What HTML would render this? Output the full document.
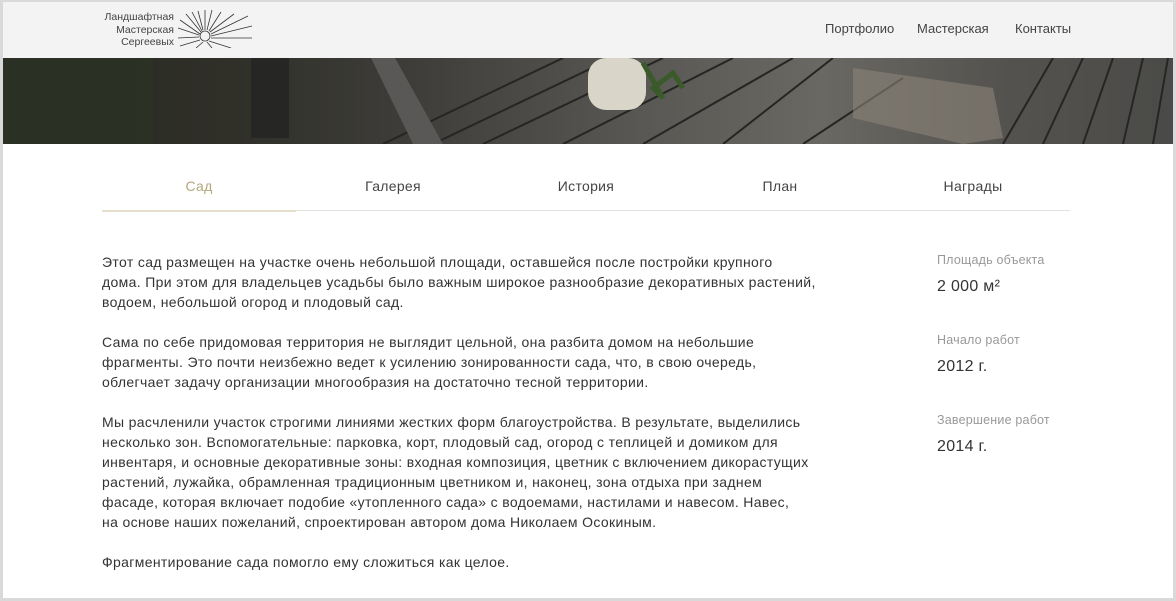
<!DOCTYPE html>
<html><head><meta charset="utf-8"><style>
*{margin:0;padding:0;box-sizing:border-box}
html,body{width:1176px;height:601px;overflow:hidden;background:#fff}
body{font-family:"Liberation Sans",sans-serif;color:#333;position:relative}
.frame{position:absolute;inset:0;border:3px solid #d9d9d9;border-top-width:2px;pointer-events:none;z-index:10}
.hdr{position:absolute;left:0;top:0;width:1176px;height:58px;background:#f3f3f3}
.logo{position:absolute;left:96px;top:11px;text-align:right;width:78px;font-size:10.5px;line-height:12.5px;color:#444}
.nav{position:absolute;top:21px;font-size:13px;color:#444}
.hero{position:absolute;left:3px;top:58px;width:1170px;height:86px;overflow:hidden;
background:linear-gradient(90deg,#26281f 0%,#303029 20%,#3e3d3a 35%,#595854 55%,#6a6863 70%,#55534f 85%,#4a4a48 100%)}
.tabs{position:absolute;left:102px;top:178px;width:968px;height:33px;border-bottom:1px solid #e2e2e2}
.tab{position:absolute;top:0;width:194px;text-align:center;font-size:14px;color:#444;letter-spacing:.3px}
.act{color:#b4a77c;border-bottom:2px solid #e6dfc9;height:34px}
.txt{position:absolute;left:102px;top:252px;font-size:14px;line-height:20px;color:#333;letter-spacing:.35px;white-space:nowrap}
.txt p{margin-bottom:20px}
.side{position:absolute;left:937px;white-space:nowrap}
.lab{font-size:12.5px;color:#999;letter-spacing:.2px}
.val{font-size:16px;color:#333;margin-top:11px;letter-spacing:.3px}
</style></head><body>
<div class="hdr">
 <div class="logo">Ландшафтная<br>Мастерская<br>Сергеевых</div>
 <svg style="position:absolute;left:176px;top:8px" width="80" height="40" viewBox="0 0 80 40" stroke="#333" stroke-width="0.8" fill="none">
  <circle cx="29" cy="28" r="5"/>
  <g>
   <line x1="29" y1="22" x2="29" y2="2"/><line x1="31" y1="22" x2="36" y2="2"/><line x1="27" y1="22" x2="22" y2="3"/>
   <line x1="25" y1="24" x2="10" y2="6"/><line x1="23" y1="27" x2="2" y2="20"/><line x1="23" y1="29" x2="2" y2="30"/>
   <line x1="24" y1="32" x2="4" y2="38"/><line x1="27" y1="34" x2="20" y2="40"/><line x1="31" y1="34" x2="36" y2="40"/>
   <line x1="33" y1="23" x2="45" y2="4"/><line x1="34" y1="24" x2="58" y2="6"/><line x1="35" y1="26" x2="72" y2="8"/>
   <line x1="35" y1="28" x2="76" y2="18"/><line x1="35" y1="30" x2="76" y2="30"/><line x1="33" y1="33" x2="55" y2="40"/>
   <line x1="26" y1="23" x2="16" y2="4"/><line x1="24" y1="26" x2="4" y2="12"/>
  </g>
 </svg>
 <div class="nav" style="left:825px">Портфолио</div>
 <div class="nav" style="left:917px">Мастерская</div>
 <div class="nav" style="left:1015px">Контакты</div>
</div>
<div class="hero">
 <svg width="1170" height="86" viewBox="0 0 1170 86">
  <rect x="0" y="0" width="150" height="86" fill="#2c3226" opacity=".8"/>
  <g stroke="#252523" stroke-width="2">
   <line x1="380" y1="86" x2="560" y2="0"/><line x1="430" y1="86" x2="610" y2="0"/><line x1="480" y1="86" x2="660" y2="0"/>
   <line x1="560" y1="86" x2="730" y2="0"/><line x1="640" y1="86" x2="790" y2="0"/><line x1="720" y1="86" x2="830" y2="0"/>
   <line x1="800" y1="86" x2="900" y2="20"/><line x1="1000" y1="86" x2="1050" y2="0"/><line x1="1040" y1="86" x2="1080" y2="0"/>
   <line x1="1080" y1="86" x2="1110" y2="0"/><line x1="1120" y1="86" x2="1140" y2="0"/><line x1="1150" y1="86" x2="1165" y2="0"/>
  </g>
  <rect x="248" y="0" width="38" height="80" fill="#262624"/>
  <path d="M368 0 L392 0 L440 86 L410 86 Z" fill="#5a5856"/>
  <rect x="585" y="0" width="58" height="52" rx="18" fill="#d9d6c9"/>
  <path d="M640 5 L660 40 L650 30 L670 15 L680 30" stroke="#3a5a2a" stroke-width="5" fill="none"/>
  <path d="M850 10 L990 30 L1000 80 L960 86 L850 60 Z" fill="#8a8478" opacity=".6"/>
 </svg>
</div>
<div class="tabs">
 <div class="tab act" style="left:0">Сад</div>
 <div class="tab" style="left:194px">Галерея</div>
 <div class="tab" style="left:387px">История</div>
 <div class="tab" style="left:581px">План</div>
 <div class="tab" style="left:774px">Награды</div>
</div>
<div class="txt">
<p>Этот сад размещен на участке очень небольшой площади, оставшейся после постройки крупного<br>дома. При этом для владельцев усадьбы было важным широкое разнообразие декоративных растений,<br>водоем, небольшой огород и плодовый сад.</p>
<p>Сама по себе придомовая территория не выглядит цельной, она разбита домом на небольшие<br>фрагменты. Это почти неизбежно ведет к усилению зонированности сада, что, в свою очередь,<br>облегчает задачу организации многообразия на достаточно тесной территории.</p>
<p>Мы расчленили участок строгими линиями жестких форм благоустройства. В результате, выделились<br>несколько зон. Вспомогательные: парковка, корт, плодовый сад, огород с теплицей и домиком для<br>инвентаря, и основные декоративные зоны: входная композиция, цветник с включением дикорастущих<br>растений, лужайка, обрамленная традиционным цветником и, наконец, зона отдыха при заднем<br>фасаде, которая включает подобие «утопленного сада» с водоемами, настилами и навесом. Навес,<br>на основе наших пожеланий, спроектирован автором дома Николаем Осокиным.</p>
<p>Фрагментирование сада помогло ему сложиться как целое.</p>
</div>
<div class="side" style="top:253px"><div class="lab">Площадь объекта</div><div class="val">2 000 м²</div></div>
<div class="side" style="top:333px"><div class="lab">Начало работ</div><div class="val">2012 г.</div></div>
<div class="side" style="top:413px"><div class="lab">Завершение работ</div><div class="val">2014 г.</div></div>
<div class="frame"></div>
</body></html>
